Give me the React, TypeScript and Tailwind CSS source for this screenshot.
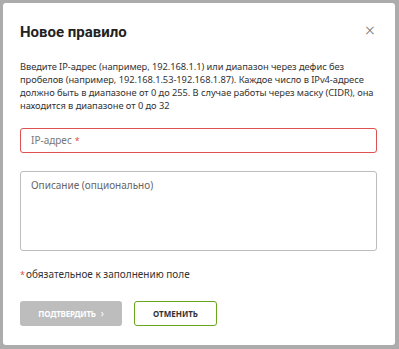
import React from "react";

export default function App() {
  return (
    <div className="w-[399px] h-[349px] bg-[#acacac] p-[3px] pr-[4px] pb-[4px]" style={{ fontFamily: '"Noto Sans", "Open Sans", sans-serif' }}>
      <div className="relative w-full h-full bg-white rounded-[3px] pl-[17px] pr-[18px] pt-[19px]">
        <button className="absolute right-[20px] top-[18px] text-[#777] text-[18px] leading-none font-light">×</button>
        <h1 className="text-[15px] font-bold text-[#222] leading-[20px]" style={{ fontFamily: 'Roboto, "Noto Sans", sans-serif' }}>Новое правило</h1>
        <p className="mt-[18px] text-[9.3px] leading-[13px] text-[#333] tracking-[-0.05px]">
          Введите IP-адрес (например, 192.168.1.1) или диапазон через дефис без пробелов (например, 192.168.1.53-192.168.1.87). Каждое число в IPv4-адресе должно быть в диапазоне от 0 до 255. В случае работы через маску (CIDR), она находится в диапазоне от 0 до 32
        </p>
        <div className="mt-[16px] h-[25px] border border-[#e05050] rounded-[3px] flex items-center px-[10px] text-[10px] text-[#777]">
          IP-адрес <span className="text-[#e05050] ml-[3px] text-[9px]">*</span>
        </div>
        <div className="mt-[18px] h-[80px] border border-[#bdbdbd] rounded-[3px] px-[10px] pt-[6px] text-[10px] text-[#666]">
          Описание (опционально)
        </div>
        <div className="mt-[16px] text-[10px] text-[#333] flex items-center">
          <span className="text-[#e05050] mr-[1px] text-[9px]">*</span>обязательное к заполнению поле
        </div>
        <div className="mt-[19px] flex gap-[12px]">
          <button className="w-[102px] h-[25px] rounded-[3px] bg-[#bdbdbd] text-white text-[8px] font-bold tracking-[-0.2px] flex items-center justify-center gap-[5px]">
            ПОДТВЕРДИТЬ <span className="font-normal text-[10px]">›</span>
          </button>
          <button className="w-[83px] h-[25px] rounded-[3px] border border-[#6aa51e] text-[#333] text-[8px] font-bold flex items-center justify-center">
            ОТМЕНИТЬ
          </button>
        </div>
      </div>
    </div>
  );
}
